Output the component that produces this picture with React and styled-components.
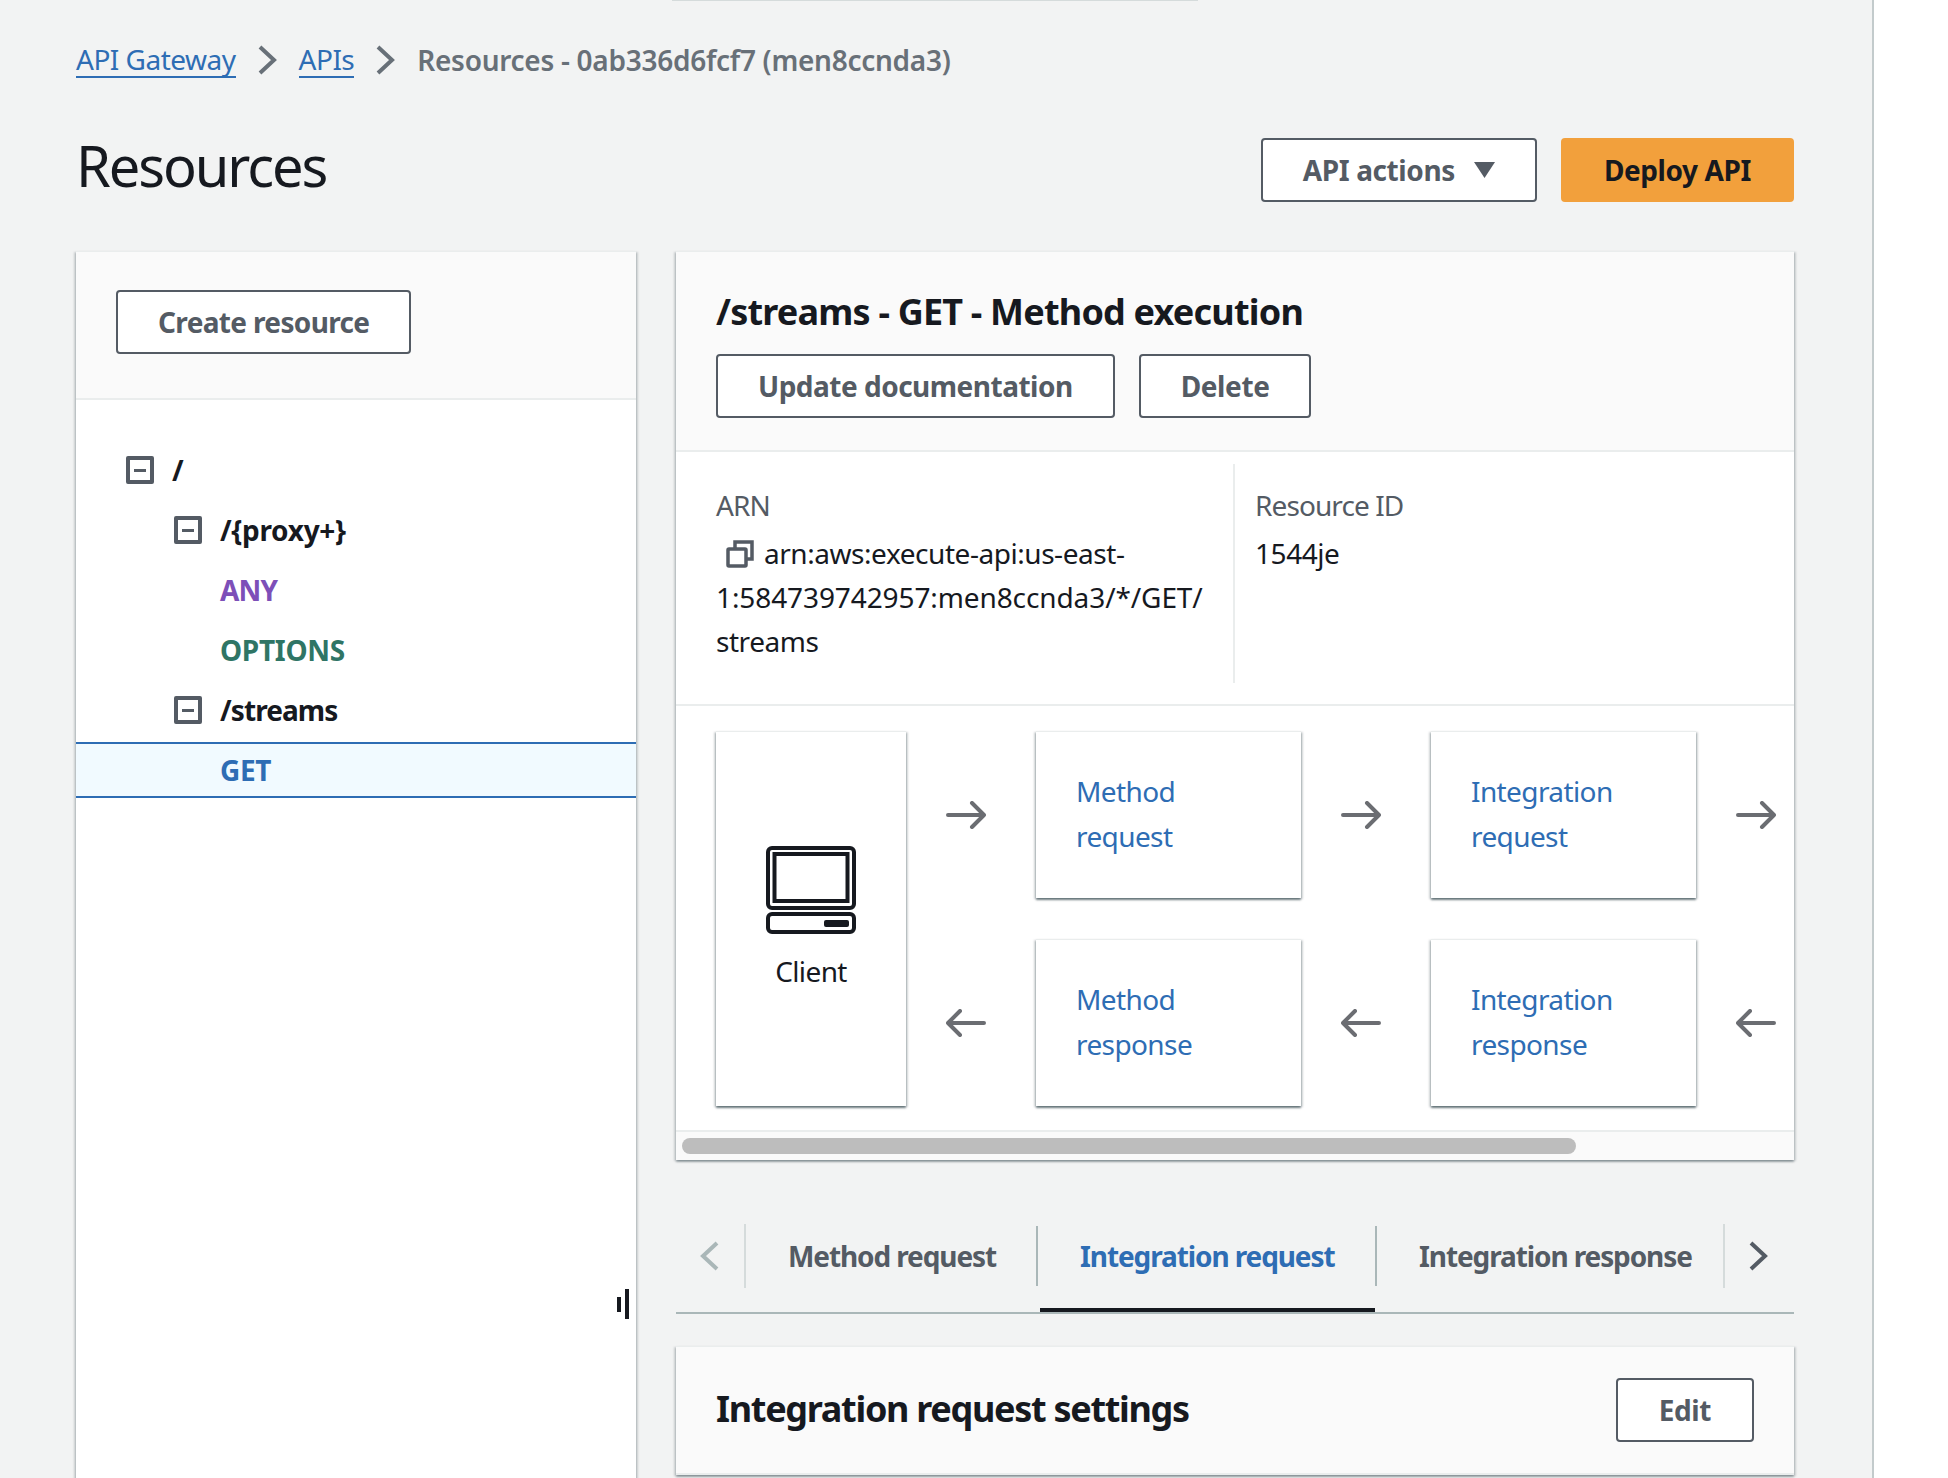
import React from "react"
import styled, { createGlobalStyle } from "styled-components"

const GlobalStyle = createGlobalStyle`
  html, body {
    margin: 0;
    background: #fff;
    font-family: "Noto Sans", "Open Sans", sans-serif;
    font-size: 28px;
    color: #16191f;
  }
  * {
    box-sizing: border-box;
  }
`

const Main = styled.div`
  width: 1874px;
  height: 1478px;
  overflow: hidden;
  background: #f2f3f3;
  border-right: 2px solid #c3cbcc;
  padding: 0 78px 0 76px;
`

const TopEdge = styled.div`
  width: 526px;
  height: 1px;
  margin-left: 596px;
  background: #d5dbdb;
`

const Breadcrumbs = styled.nav`
  display: flex;
  align-items: center;
  height: 40px;
  margin-top: 39px;
  gap: 22px;
  letter-spacing: -0.5px;
`

const Crumb = styled.a`
  color: #2e6db4;
  line-height: 34px;
  border-bottom: 2px solid #2e6db4;
`

const CurrentCrumb = styled.span`
  color: #687078;
  font-weight: 600;
  letter-spacing: -0.28px;
`

const PageHeader = styled.header`
  display: flex;
  align-items: center;
  justify-content: space-between;
  height: 64px;
  margin-top: 58px;
`

const PageTitle = styled.h1`
  margin: 0;
  font-size: 56px;
  font-weight: 400;
  letter-spacing: -2.1px;
  line-height: 64px;
  position: relative;
  top: -5px;
`

const Actions = styled.div`
  display: flex;
  gap: 24px;
`

const Button = styled.button`
  display: inline-flex;
  align-items: center;
  gap: 19px;
  height: 64px;
  padding: 0 ${(p) => p.$pad || 40}px;
  font: inherit;
  font-weight: 700;
  letter-spacing: ${(p) => p.$spacing ?? -0.4}px;
  color: ${(p) => (p.$primary ? "#16191f" : "#545b64")};
  background: ${(p) => (p.$primary ? "#f2a03c" : "#fff")};
  border: 2px solid ${(p) => (p.$primary ? "#f2a03c" : "#545b64")};
  border-radius: 4px;
`

const Columns = styled.div`
  display: grid;
  grid-template-columns: 560px 1118px;
  gap: 40px;
  margin-top: 49px;
  align-items: start;
`

const Panel = styled.section`
  background: #fff;
  border-top: 1px solid #eaeded;
  box-shadow: 0 2px 2px rgba(0, 28, 36, 0.3), 2px 1px 2px rgba(0, 28, 36, 0.15),
    -2px 1px 2px rgba(0, 28, 36, 0.15);
`

const SidePanel = styled(Panel)`
  position: relative;
  height: 1300px;
`

const PanelHeader = styled.div`
  background: #fafafa;
  border-bottom: 2px solid #eaeded;
`

const SideHeader = styled(PanelHeader)`
  height: 148px;
  padding: 38px 40px;
`

const Tree = styled.ul`
  list-style: none;
  margin: 0;
  padding: 40px 0 0;
`

const TreeRow = styled.li`
  display: flex;
  align-items: center;
  gap: 18px;
  height: ${(p) => (p.$selected ? 56 : 60)}px;
  margin-top: ${(p) => (p.$selected ? 2 : 0)}px;
  padding-left: ${(p) => p.$indent}px;
  font-weight: 700;
  letter-spacing: ${(p) => p.$spacing ?? -0.3}px;
  color: ${(p) => p.$color || "#16191f"};
  background: ${(p) => (p.$selected ? "#f1faff" : "transparent")};
  border-top: ${(p) => (p.$selected ? "2px solid #2e6db4" : "none")};
  border-bottom: ${(p) => (p.$selected ? "2px solid #2e6db4" : "none")};
`

const Toggle = styled.span`
  display: flex;
  align-items: center;
  justify-content: center;
  width: 28px;
  height: 28px;
  border: 4px solid #545b64;
  border-radius: 2px;

  &::before {
    content: "";
    width: 12px;
    height: 3px;
    background: #545b64;
  }
`

const Resizer = styled.div`
  position: absolute;
  left: 541px;
  top: 1037px;
  display: flex;
  align-items: center;
  gap: 4px;

  &::before {
    content: "";
    width: 4px;
    height: 15px;
    background: #16191f;
  }

  &::after {
    content: "";
    width: 4px;
    height: 30px;
    background: #16191f;
  }
`

const ExecutionHeader = styled(PanelHeader)`
  height: 200px;
  padding: 37px 40px 0;
`

const SectionTitle = styled.h2`
  margin: 0;
  font-size: 36px;
  font-weight: 700;
  letter-spacing: ${(p) => p.$spacing ?? -0.8}px;
  line-height: 46px;
`

const SettingsTitle = styled(SectionTitle)`
  position: relative;
  top: -1px;
`

const ButtonRow = styled.div`
  display: flex;
  gap: 24px;
  margin-top: 19px;
`

const Details = styled.div`
  display: grid;
  grid-template-columns: 517px 1fr;
  height: 254px;
  padding: 12px 0 21px 40px;
  border-bottom: 2px solid #eaeded;
  letter-spacing: -0.45px;
`

const DetailCell = styled.div`
  padding-top: 19px;

  & + & {
    padding-left: 20px;
    border-left: 2px solid #eaeded;
  }
`

const DetailLabel = styled.div`
  color: #545b64;
  line-height: 44px;
  letter-spacing: -0.9px;
`

const DetailValue = styled.div`
  margin-top: 4px;
  line-height: 44px;
`

const ArnMiddle = styled.span`
  letter-spacing: -0.1px;
`

const CopyIcon = styled.svg`
  width: 28px;
  height: 28px;
  margin: 0 10px 0 10px;
  vertical-align: -4px;
`

const Flow = styled.div`
  display: grid;
  grid-template-columns: 190px 130px 265px 130px 265px 98px;
  grid-template-rows: 167px 167px;
  row-gap: 41px;
  height: 424px;
  padding: 25px 0 0 40px;
  letter-spacing: -0.6px;
`

const Card = styled.div`
  background: #fff;
  border-top: 1px solid #eaeded;
  box-shadow: 0 2px 2px rgba(0, 28, 36, 0.5), 2px 1px 2px rgba(0, 28, 36, 0.15),
    -2px 1px 2px rgba(0, 28, 36, 0.15);
`

const ClientCard = styled(Card)`
  grid-row: 1 / 3;
  display: flex;
  flex-direction: column;
  align-items: center;
  padding-top: 114px;
`

const ClientLabel = styled.div`
  margin-top: 15px;
  line-height: 44px;
`

const StepCard = styled(Card)`
  padding: 37px 40px;
  line-height: 45px;
  color: #2e6db4;
`

const ArrowCell = styled.div`
  display: flex;
  align-items: center;
  padding-left: 40px;
`

const Scrollbar = styled.div`
  height: 30px;
  padding: 6px 6px 0;
  background: #fafafa;
  border-top: 2px solid #eaeded;
`

const ScrollThumb = styled.div`
  width: 894px;
  height: 16px;
  border-radius: 8px;
  background: #bdbdbd;
`

const TabBar = styled.div`
  display: flex;
  align-items: flex-start;
  height: 90px;
  margin-top: 64px;
  border-bottom: 2px solid #aab7b8;
`

const TabScroll = styled.div`
  display: flex;
  align-items: center;
  height: 64px;
  width: ${(p) => p.$width}px;
  padding-left: ${(p) => p.$pad}px;
  border-right: ${(p) => (p.$divider ? "2px solid #d5dbdb" : "none")};
  border-left: ${(p) => (p.$left ? "2px solid #d5dbdb" : "none")};
`

const Tab = styled.div`
  position: relative;
  display: flex;
  align-items: center;
  height: 60px;
  margin-top: 2px;
  width: ${(p) => p.$width}px;
  padding-left: 42px;
  font-weight: 700;
  letter-spacing: -1.1px;
  white-space: nowrap;
  color: ${(p) => (p.$active ? "#2e6db4" : "#545b64")};
  border-right: ${(p) => (p.$last ? "none" : "2px solid #aab7b8")};

  &::after {
    content: "";
    display: ${(p) => (p.$active ? "block" : "none")};
    position: absolute;
    left: 2px;
    right: 0;
    bottom: -26px;
    height: 4px;
    background: #16191f;
  }
`

const SettingsPanel = styled(Panel)`
  margin-top: 32px;
`

const SettingsHeader = styled(PanelHeader)`
  display: flex;
  align-items: center;
  justify-content: space-between;
  height: 128px;
  padding: 0 40px;
`

function Chevron({ dir = "right", color = "#687078", w = 19, h = 30 }) {
  const d = dir === "right" ? "M2 2 L16 15 L2 28" : "M17 2 L3 15 L17 28"
  return (
    <svg width={w} height={h} viewBox="0 0 19 30" fill="none">
      <path d={d} stroke={color} strokeWidth="4" />
    </svg>
  )
}

function Arrow({ dir = "right" }) {
  return (
    <svg width="40" height="28" viewBox="0 0 40 28" fill="none"
      style={{ transform: dir === "left" ? "scaleX(-1)" : "none" }}>
      <path d="M2 14 H38 M26 2 L38 14 L26 26" stroke="#6b6d72" strokeWidth="4" strokeLinecap="round" strokeLinejoin="round" />
    </svg>
  )
}

function ClientIcon() {
  return (
    <svg width="90" height="88" viewBox="0 0 90 88" fill="none" stroke="#16191f" strokeWidth="4">
      <rect x="2" y="2" width="86" height="60" rx="4" />
      <rect x="8.5" y="8" width="73" height="47" />
      <rect x="2" y="68" width="86" height="18" rx="4" />
      <rect x="58" y="74" width="25" height="7" rx="2" fill="#16191f" stroke="none" />
    </svg>
  )
}

export default function App() {
  return (
    <>
      <GlobalStyle />
      <Main>
        <TopEdge />
        <Breadcrumbs>
          <Crumb>API Gateway</Crumb>
          <Chevron />
          <Crumb>APIs</Crumb>
          <Chevron />
          <CurrentCrumb>Resources - 0ab336d6fcf7 (men8ccnda3)</CurrentCrumb>
        </Breadcrumbs>

        <PageHeader>
          <PageTitle>Resources</PageTitle>
          <Actions>
            <Button>
              API actions
              <svg width="21" height="16" viewBox="0 0 21 16">
                <path d="M0 0 H21 L10.5 16 Z" fill="#545b64" />
              </svg>
            </Button>
            <Button $primary $pad={41}>Deploy API</Button>
          </Actions>
        </PageHeader>

        <Columns>
          <SidePanel>
            <SideHeader>
              <Button $spacing={-0.65}>Create resource</Button>
            </SideHeader>
            <Tree>
              <TreeRow $indent={50}><Toggle />/</TreeRow>
              <TreeRow $indent={98}><Toggle />/{"{proxy+}"}</TreeRow>
              <TreeRow $indent={144} $color="#7d4fb8" $spacing={-0.8}>ANY</TreeRow>
              <TreeRow $indent={144} $color="#2f7565">OPTIONS</TreeRow>
              <TreeRow $indent={98} $spacing={-0.9}><Toggle />/streams</TreeRow>
              <TreeRow $indent={144} $color="#2e6db4" $selected>GET</TreeRow>
            </Tree>
            <Resizer />
          </SidePanel>

          <div>
            <Panel>
              <ExecutionHeader>
                <SectionTitle>/streams - GET - Method execution</SectionTitle>
                <ButtonRow>
                  <Button $spacing={-0.5}>Update documentation</Button>
                  <Button>Delete</Button>
                </ButtonRow>
              </ExecutionHeader>

              <Details>
                <DetailCell>
                  <DetailLabel>ARN</DetailLabel>
                  <DetailValue>
                    <CopyIcon viewBox="0 0 28 28" fill="none" stroke="#545b64" strokeWidth="3.5">
                      <rect x="2" y="9" width="18" height="17" rx="1" />
                      <path d="M9 8 V2 H26 V19 H21" />
                    </CopyIcon>
                    arn:aws:execute-api:us-east-
                    <br />
                    <ArnMiddle>1:584739742957:men8ccnda3/*/GET/</ArnMiddle>
                    <br />
                    streams
                  </DetailValue>
                </DetailCell>
                <DetailCell>
                  <DetailLabel>Resource ID</DetailLabel>
                  <DetailValue>1544je</DetailValue>
                </DetailCell>
              </Details>

              <Flow>
                <ClientCard>
                  <ClientIcon />
                  <ClientLabel>Client</ClientLabel>
                </ClientCard>
                <ArrowCell><Arrow /></ArrowCell>
                <StepCard>Method<br />request</StepCard>
                <ArrowCell><Arrow /></ArrowCell>
                <StepCard>Integration<br />request</StepCard>
                <ArrowCell><Arrow /></ArrowCell>
                <ArrowCell><Arrow dir="left" /></ArrowCell>
                <StepCard>Method<br />response</StepCard>
                <ArrowCell><Arrow dir="left" /></ArrowCell>
                <StepCard>Integration<br />response</StepCard>
                <ArrowCell><Arrow dir="left" /></ArrowCell>
              </Flow>

              <Scrollbar>
                <ScrollThumb />
              </Scrollbar>
            </Panel>

            <TabBar>
              <TabScroll $width={70} $pad={24} $divider>
                <Chevron dir="left" color="#aab7b8" />
              </TabScroll>
              <Tab $width={292}>Method request</Tab>
              <Tab $width={339} $active>Integration request</Tab>
              <Tab $width={346} $last>Integration response</Tab>
              <TabScroll $width={71} $pad={24} $left>
                <Chevron color="#545b64" />
              </TabScroll>
            </TabBar>

            <SettingsPanel>
              <SettingsHeader>
                <SettingsTitle $spacing={-1.3}>Integration request settings</SettingsTitle>
                <Button $pad={41}>Edit</Button>
              </SettingsHeader>
            </SettingsPanel>
          </div>
        </Columns>
      </Main>
    </>
  )
}
